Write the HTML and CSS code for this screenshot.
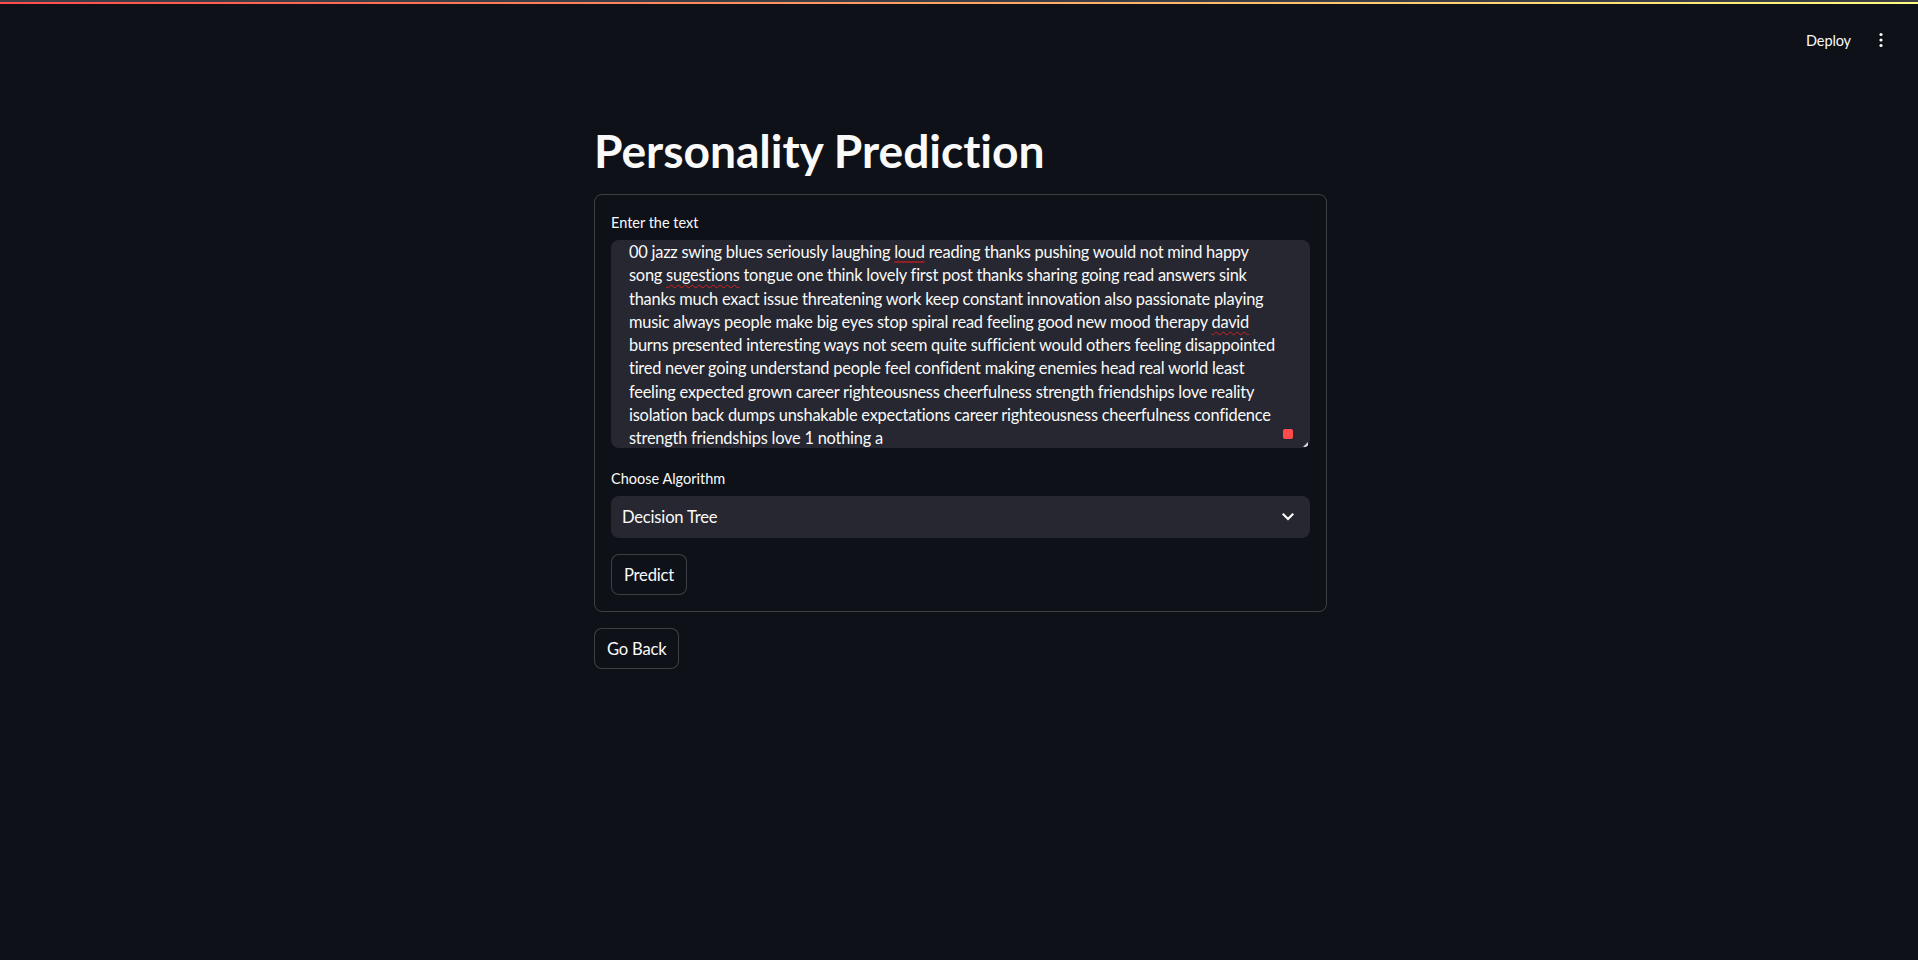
FILE: index.html
```html
<!DOCTYPE html>
<html lang="en">
<head>
<meta charset="utf-8">
<title>Personality Prediction</title>
<link rel="stylesheet" href="styles.css">
</head>
<body>
<div class="topline"></div>
<header class="toolbar">
  <span class="deploy">Deploy</span>
  <svg class="kebab" width="16" height="16" viewBox="0 0 16 16" aria-hidden="true">
    <circle cx="8" cy="2.5" r="1.6" fill="#fafafa"/>
    <circle cx="8" cy="8" r="1.6" fill="#fafafa"/>
    <circle cx="8" cy="13.5" r="1.6" fill="#fafafa"/>
  </svg>
</header>
<main class="page">
  <h1 class="title">Personality Prediction</h1>
  <section class="form">
    <div class="label">Enter the text</div>
    <div class="textarea">
      <div class="text">
        <div class="line">00 jazz swing blues seriously laughing <span class="gram">loud</span> reading thanks pushing would not mind happy</div>
        <div class="line">song <span class="spell">sugestions</span> tongue one think lovely first post thanks sharing going read answers sink</div>
        <div class="line">thanks much exact issue threatening work keep constant innovation also passionate playing</div>
        <div class="line">music always people make big eyes stop spiral read feeling good new mood therapy <span class="spell">david</span></div>
        <div class="line">burns presented interesting ways not seem quite sufficient would others feeling disappointed</div>
        <div class="line">tired never going understand people feel confident making enemies head real world least</div>
        <div class="line">feeling expected grown career righteousness cheerfulness strength friendships love reality</div>
        <div class="line">isolation back dumps unshakable expectations career righteousness cheerfulness confidence</div>
        <div class="line">strength friendships love 1 nothing a</div>
      </div>
      <span class="ext-badge"></span>
      <span class="grip"></span>
    </div>
    <div class="label label-gap">Choose Algorithm</div>
    <div class="select">
      <span>Decision Tree</span>
      <svg class="chev" width="12" height="8" viewBox="0 0 12 8" aria-hidden="true">
        <path d="M1.5 1.5 L6 6 L10.5 1.5" fill="none" stroke="#fafafa" stroke-width="2.2" stroke-linecap="square"/>
      </svg>
    </div>
    <div class="row">
      <button class="btn">Predict</button>
    </div>
  </section>
  <div class="row back-row">
    <button class="btn">Go Back</button>
  </div>
</main>
</body>
</html>
```
FILE: styles.css
```css
html, body {
  margin: 0;
  padding: 0;
  background: #0e1117;
  color: #fafafa;
  font-family: Lato, "Noto Sans", sans-serif;
  font-variant-ligatures: none;
}

.topline {
  height: 2px;
  border-top: 2px solid #3b3e45;
  background: linear-gradient(90deg, #ff4b4b, #fffd80);
}

.toolbar {
  height: 72px;
  display: flex;
  justify-content: flex-end;
  align-items: center;
  gap: 22px;
  padding-right: 29px;
}

.deploy {
  font-size: 14.5px;
  font-weight: 400;
  letter-spacing: -0.1px;
  color: #fafafa;
}

.kebab {
  display: block;
}

.page {
  width: 733px;
  margin-left: calc(50% - 365px);
  padding-top: 46px;
}

.title {
  margin: 0 0 16px 0;
  font-size: 46.2px;
  line-height: 56px;
  font-weight: 700;
  letter-spacing: -0.05px;
}

.form {
  border: 1px solid rgba(250, 250, 250, 0.2);
  border-radius: 8px;
  padding: 17px 16px 16px 16px;
  display: flex;
  flex-direction: column;
}

.label {
  font-size: 14.5px;
  line-height: 21px;
  margin-bottom: 7px;
}

.label-gap {
  margin-top: 20px;
}

.textarea {
  position: relative;
  height: 208px;
  background: #262730;
  border-radius: 8px;
  overflow: hidden;
}

.text {
  font-size: 16.4px;
  letter-spacing: -0.23px;
  line-height: 23.3px;
  padding-left: 18px;
}

.line {
  white-space: nowrap;
}

.spell {
  text-decoration: underline wavy #d42020;
  text-decoration-thickness: 1px;
  text-underline-offset: 3px;
}

.gram {
  text-decoration: underline solid #8e1f24;
  text-decoration-thickness: 2px;
  text-underline-offset: 3px;
}

.ext-badge {
  position: absolute;
  right: 17px;
  bottom: 9px;
  width: 10px;
  height: 10px;
  border-radius: 2px;
  background: #ff4b4b;
}

.grip {
  position: absolute;
  right: 2px;
  bottom: 1px;
  width: 0;
  height: 0;
  border-left: 5px solid transparent;
  border-bottom: 5px solid #d8d8d8;
}

.select {
  height: 42px;
  background: #262730;
  border-radius: 8px;
  display: flex;
  align-items: center;
  justify-content: space-between;
  padding: 0 16px 0 11px;
  font-size: 16.6px;
  letter-spacing: -0.2px;
}

.chev {
  display: block;
}

.row {
  display: flex;
  margin-top: 16px;
}

.back-row {
  margin-top: 16px;
}

.btn {
  height: 41px;
  padding: 0 12px;
  background: #0e1117;
  color: #fafafa;
  border: 1px solid rgba(250, 250, 250, 0.2);
  border-radius: 8px;
  font-family: Lato, "Noto Sans", sans-serif;
  font-size: 16.6px;
  letter-spacing: -0.2px;
  font-variant-ligatures: none;
}
```
